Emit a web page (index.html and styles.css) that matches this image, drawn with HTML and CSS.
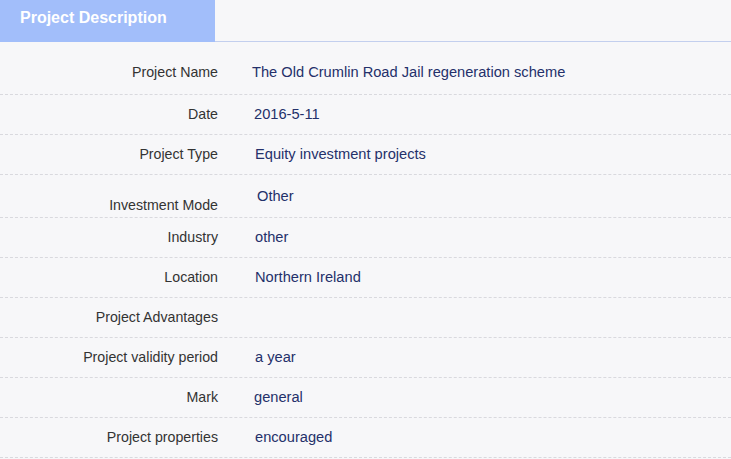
FILE: index.html
```html
<!DOCTYPE html>
<html>
<head>
<meta charset="utf-8">
<link rel="stylesheet" href="styles.css">
</head>
<body>
<div class="tabs">
  <div class="tab">Project Description</div>
</div>
<div class="details">
  <div class="row row-first"><div class="label">Project Name</div><div class="value v-first">The Old Crumlin Road Jail regeneration scheme</div></div>
  <div class="row"><div class="label">Date</div><div class="value">2016-5-11</div></div>
  <div class="row"><div class="label">Project Type</div><div class="value v-shift">Equity investment projects</div></div>
  <div class="row row-tall"><div class="label label-bottom">Investment Mode</div><div class="value value-top">Other</div></div>
  <div class="row"><div class="label">Industry</div><div class="value v-shift">other</div></div>
  <div class="row"><div class="label">Location</div><div class="value v-shift">Northern Ireland</div></div>
  <div class="row"><div class="label">Project Advantages</div><div class="value"></div></div>
  <div class="row"><div class="label">Project validity period</div><div class="value v-shift">a year</div></div>
  <div class="row"><div class="label">Mark</div><div class="value">general</div></div>
  <div class="row"><div class="label">Project properties</div><div class="value v-shift">encouraged</div></div>
</div>
</body>
</html>
```
FILE: styles.css
```css
html, body {
  margin: 0;
  padding: 0;
  background: #f7f7f9;
  font-family: "Liberation Sans", Arial, sans-serif;
  font-size: 14px;
}
.tabs {
  display: flex;
  height: 41px;
  border-bottom: 1px solid #c3cfee;
}
.tab {
  width: 195px;
  padding-left: 20px;
  height: 42px;
  background: #a2befa;
  color: #ffffff;
  font-weight: bold;
  font-size: 16px;
  line-height: 36px;
}
.details {
  padding-top: 13px;
}
.row {
  display: grid;
  grid-template-columns: 218px 1fr;
  column-gap: 36px;
  height: 39px;
  box-sizing: content-box;
  border-bottom: 1px dashed #d9d9de;
  align-items: center;
}
.row > div {
  padding-bottom: 2px;
}
.row-first > div {
  padding-bottom: 6px;
}
.row-tall {
  height: 42px;
}
.label {
  text-align: right;
  color: #333333;
  font-size: 14.2px;
}
.value {
  color: #24306a;
  font-size: 14.65px;
}
.v-first {
  margin-left: -2px;
}
.v-shift {
  margin-left: 1px;
}
.row > .label-bottom {
  align-self: end;
  padding-bottom: 4px;
}
.row > .value-top {
  align-self: start;
  padding-top: 13px;
  padding-bottom: 0;
  margin-left: 3px;
}
```
